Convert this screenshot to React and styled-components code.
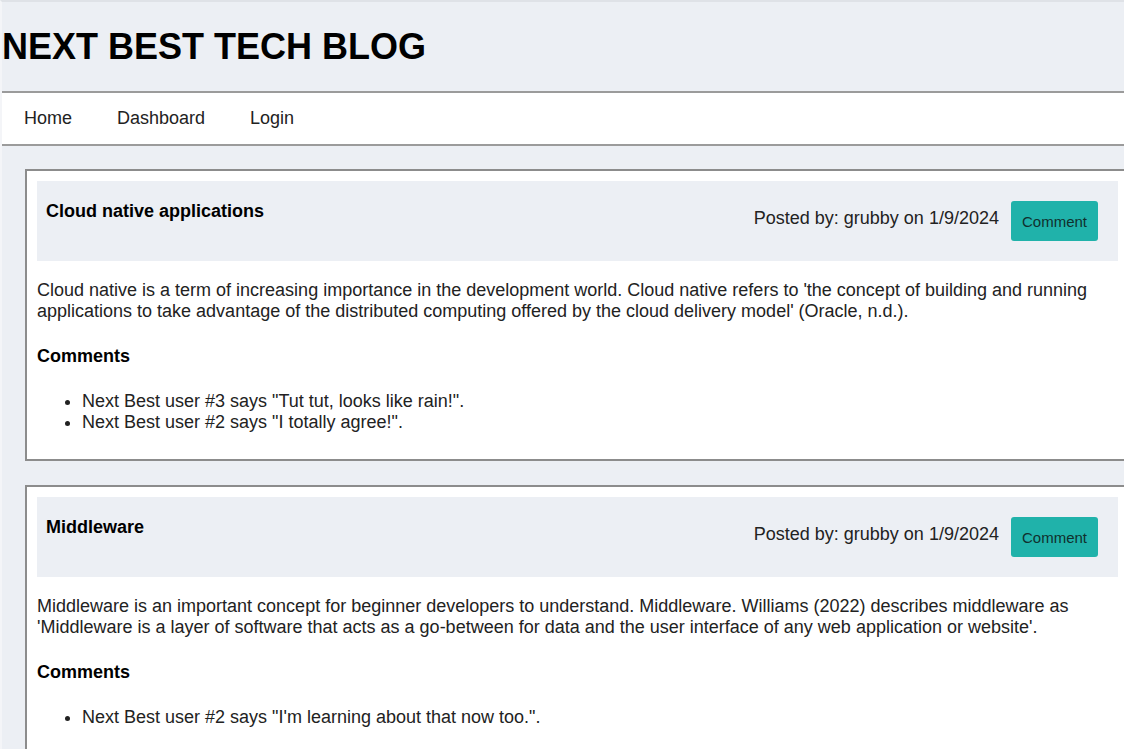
import React from "react";
import styled, { createGlobalStyle } from "styled-components";

const GlobalStyle = createGlobalStyle`
  html, body {
    margin: 0;
    padding: 0;
    overflow: hidden;
    background: #eceff4;
  }
  body {
    font-family: "Liberation Sans", Arial, sans-serif;
    color: #222;
  }
  * { box-sizing: border-box; }
`;

const Page = styled.div`
  min-height: 749px;
  border-top: 2px solid #dfe2e7;
  border-left: 2px solid #f4f5f8;
  background: #eceff4;
`;

const Header = styled.header`
  padding: 24px 0;
  background: #eceff4;
`;

const Title = styled.h1`
  margin: 0;
  font-size: 36px;
  line-height: 41px;
  font-weight: 700;
  color: #000;
`;

const Nav = styled.nav`
  display: flex;
  align-items: center;
  height: 55px;
  background: #fff;
  border-top: 2px solid #9b9b9b;
  border-bottom: 2px solid #9b9b9b;
`;

const NavLink = styled.a`
  padding: 0 22.5px;
  font-size: 18px;
  color: #222;
  text-decoration: none;
  &:first-child { padding-left: 22px; }
`;

const Main = styled.main`
  padding: 23px 0 0 23px;
`;

const Card = styled.article`
  width: 1105px;
  margin-bottom: 24px;
  padding: 10px;
  background: #fff;
  border: 2px solid #8c8c8c;
`;

const PostHeader = styled.div`
  display: flex;
  justify-content: space-between;
  align-items: flex-start;
  height: 80px;
  padding: 20px 20px 20px 9px;
  background: #eceff4;
`;

const PostTitle = styled.h3`
  margin: 0;
  font-size: 18px;
  line-height: 21px;
  font-weight: 700;
  color: #000;
`;

const Meta = styled.div`
  display: flex;
  align-items: center;
  gap: 12px;
  height: 40px;
`;

const Posted = styled.span`
  font-size: 18px;
  color: #222;
  margin-top: -5px;
`;

const CommentButton = styled.button`
  height: 40px;
  padding: 0 11px;
  border: none;
  border-radius: 3px;
  background: #20b2aa;
  color: #10302e;
  font-family: "Liberation Sans", Arial, sans-serif;
  font-size: 15px;
  cursor: pointer;
`;

const Body = styled.p`
  margin: 19px 0 0;
  font-size: 18px;
  line-height: 21px;
  color: #222;
`;

const CommentsTitle = styled.h4`
  margin: 24px 0;
  font-size: 18px;
  line-height: 21px;
  font-weight: 700;
  color: #000;
`;

const CommentList = styled.ul`
  margin: 0 0 16px;
  padding-left: 45px;
  font-size: 18px;
  line-height: 21px;
  color: #222;
`;

const posts = [
  {
    title: "Cloud native applications",
    author: "grubby",
    date: "1/9/2024",
    body:
      "Cloud native is a term of increasing importance in the development world. Cloud native refers to 'the concept of building and running applications to take advantage of the distributed computing offered by the cloud delivery model' (Oracle, n.d.).",
    comments: [
      'Next Best user #3 says "Tut tut, looks like rain!".',
      'Next Best user #2 says "I totally agree!".',
    ],
  },
  {
    title: "Middleware",
    author: "grubby",
    date: "1/9/2024",
    body:
      "Middleware is an important concept for beginner developers to understand. Middleware. Williams (2022) describes middleware as 'Middleware is a layer of software that acts as a go-between for data and the user interface of any web application or website'.",
    comments: ['Next Best user #2 says "I\'m learning about that now too.".'],
  },
];

export default function App() {
  return (
    <>
      <GlobalStyle />
      <Page>
        <Header>
          <Title>NEXT BEST TECH BLOG</Title>
        </Header>
        <Nav>
          <NavLink href="#">Home</NavLink>
          <NavLink href="#">Dashboard</NavLink>
          <NavLink href="#">Login</NavLink>
        </Nav>
        <Main>
          {posts.map((p) => (
            <Card key={p.title}>
              <PostHeader>
                <PostTitle>{p.title}</PostTitle>
                <Meta>
                  <Posted>
                    Posted by: {p.author} on {p.date}
                  </Posted>
                  <CommentButton>Comment</CommentButton>
                </Meta>
              </PostHeader>
              <Body>{p.body}</Body>
              <CommentsTitle>Comments</CommentsTitle>
              <CommentList>
                {p.comments.map((c) => (
                  <li key={c}>{c}</li>
                ))}
              </CommentList>
            </Card>
          ))}
        </Main>
      </Page>
    </>
  );
}
